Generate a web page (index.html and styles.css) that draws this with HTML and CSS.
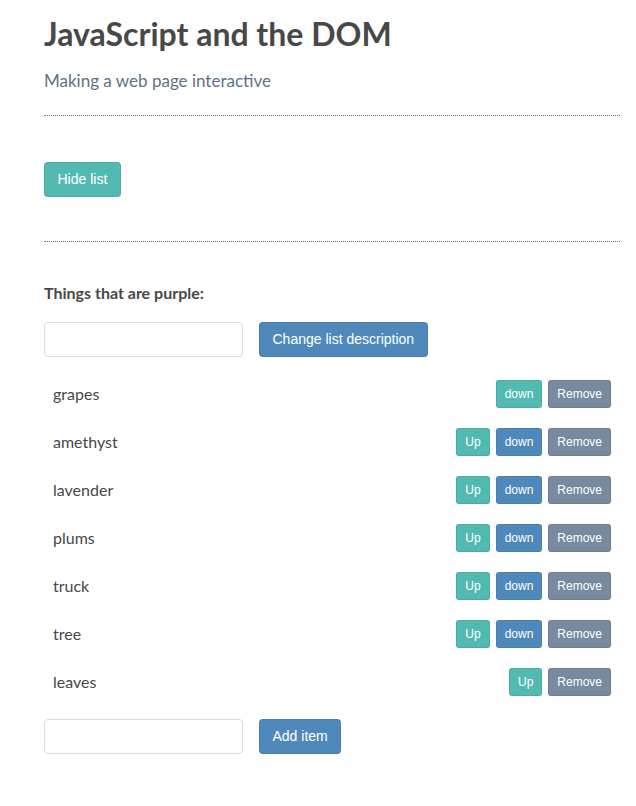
FILE: index.html
```html
<!DOCTYPE html>
<html>
<head>
<meta charset="utf-8">
<title>JavaScript and the DOM</title>
<link rel="stylesheet" href="styles.css">
</head>
<body>
<div class="page">
  <h1 class="title">JavaScript and the DOM</h1>
  <p class="description">Making a web page interactive</p>
  <hr class="rule">
  <div class="toggle-section">
    <button class="btn btn-teal">Hide list</button>
  </div>
  <hr class="rule rule-second">
  <div class="list">
    <p class="list-description">Things that are purple:</p>
    <div class="form-row">
      <input class="text-input" type="text">
      <button class="btn btn-blue">Change list description</button>
    </div>
    <ul class="items">
      <li class="item"><span class="item-name">grapes</span><span class="item-actions"><button class="sbtn sbtn-teal">down</button><button class="sbtn sbtn-gray">Remove</button></span></li>
      <li class="item"><span class="item-name">amethyst</span><span class="item-actions"><button class="sbtn sbtn-teal">Up</button><button class="sbtn sbtn-blue">down</button><button class="sbtn sbtn-gray">Remove</button></span></li>
      <li class="item"><span class="item-name">lavender</span><span class="item-actions"><button class="sbtn sbtn-teal">Up</button><button class="sbtn sbtn-blue">down</button><button class="sbtn sbtn-gray">Remove</button></span></li>
      <li class="item"><span class="item-name">plums</span><span class="item-actions"><button class="sbtn sbtn-teal">Up</button><button class="sbtn sbtn-blue">down</button><button class="sbtn sbtn-gray">Remove</button></span></li>
      <li class="item"><span class="item-name">truck</span><span class="item-actions"><button class="sbtn sbtn-teal">Up</button><button class="sbtn sbtn-blue">down</button><button class="sbtn sbtn-gray">Remove</button></span></li>
      <li class="item"><span class="item-name">tree</span><span class="item-actions"><button class="sbtn sbtn-teal">Up</button><button class="sbtn sbtn-blue">down</button><button class="sbtn sbtn-gray">Remove</button></span></li>
      <li class="item"><span class="item-name">leaves</span><span class="item-actions"><button class="sbtn sbtn-teal">Up</button><button class="sbtn sbtn-gray">Remove</button></span></li>
    </ul>
    <div class="form-row form-row-add">
      <input class="text-input" type="text">
      <button class="btn btn-blue">Add item</button>
    </div>
  </div>
</div>
</body>
</html>
```

FILE: styles.css
```css
html, body {
  margin: 0;
  padding: 0;
  background: #ffffff;
}

body {
  font-family: Lato, "Open Sans", sans-serif;
  color: #484848;
}

.page {
  width: 576px;
  margin-left: 44px;
  padding-top: 15px;
}

.title {
  margin: 0;
  font-size: 32px;
  line-height: 38px;
  font-weight: 700;
  color: #484848;
}

.description {
  margin: 17px 0 0;
  font-size: 17px;
  line-height: 22px;
  color: #5f7186;
}

.rule {
  margin: 23px 0 0;
  height: 0;
  border: 0;
  border-top: 1px dotted #5b6b7c;
}

.toggle-section {
  padding-top: 46px;
}

.rule-second {
  margin-top: 44px;
}

.list-description {
  margin: 41px 0 0;
  font-size: 16px;
  line-height: 20px;
  font-weight: 700;
  color: #484848;
}

.form-row {
  display: flex;
  align-items: center;
  gap: 16px;
  margin-top: 19px;
}

.form-row-add {
  margin-top: 13px;
}

.text-input {
  box-sizing: border-box;
  width: 199px;
  height: 35px;
  margin: 0;
  border: 1px solid #dcdcdc;
  border-radius: 4px;
  padding: 0 8px;
  font-size: 14px;
}

.btn {
  box-sizing: border-box;
  height: 35px;
  margin: 0;
  padding: 0 12.5px;
  border: 1px solid rgba(0, 0, 0, 0.08);
  border-radius: 4px;
  font-family: "Liberation Sans", Arial, sans-serif;
  font-size: 14px;
  line-height: 33px;
  color: #ffffff;
  cursor: pointer;
}

.btn-teal { background: #52bab3; }
.btn-blue { background: #4f89bc; }

.items {
  list-style: none;
  margin: 13px 0 0;
  padding: 0;
}

.item {
  display: flex;
  align-items: center;
  height: 48px;
  padding: 0 9px 1px 9px;
  box-sizing: border-box;
  font-size: 16px;
}

.item-name {
  flex: 1;
  color: #484848;
}

.item-actions {
  display: flex;
  gap: 6px;
}

.sbtn {
  box-sizing: border-box;
  height: 28px;
  margin: 0;
  padding: 0 8px;
  border: 1px solid rgba(0, 0, 0, 0.08);
  border-radius: 3px;
  font-family: "Liberation Sans", Arial, sans-serif;
  font-size: 12px;
  line-height: 26px;
  color: #ffffff;
  cursor: pointer;
}

.sbtn-teal { background: #52bab3; }
.sbtn-blue { background: #4f89bc; }
.sbtn-gray { background: #778a9f; }
```
